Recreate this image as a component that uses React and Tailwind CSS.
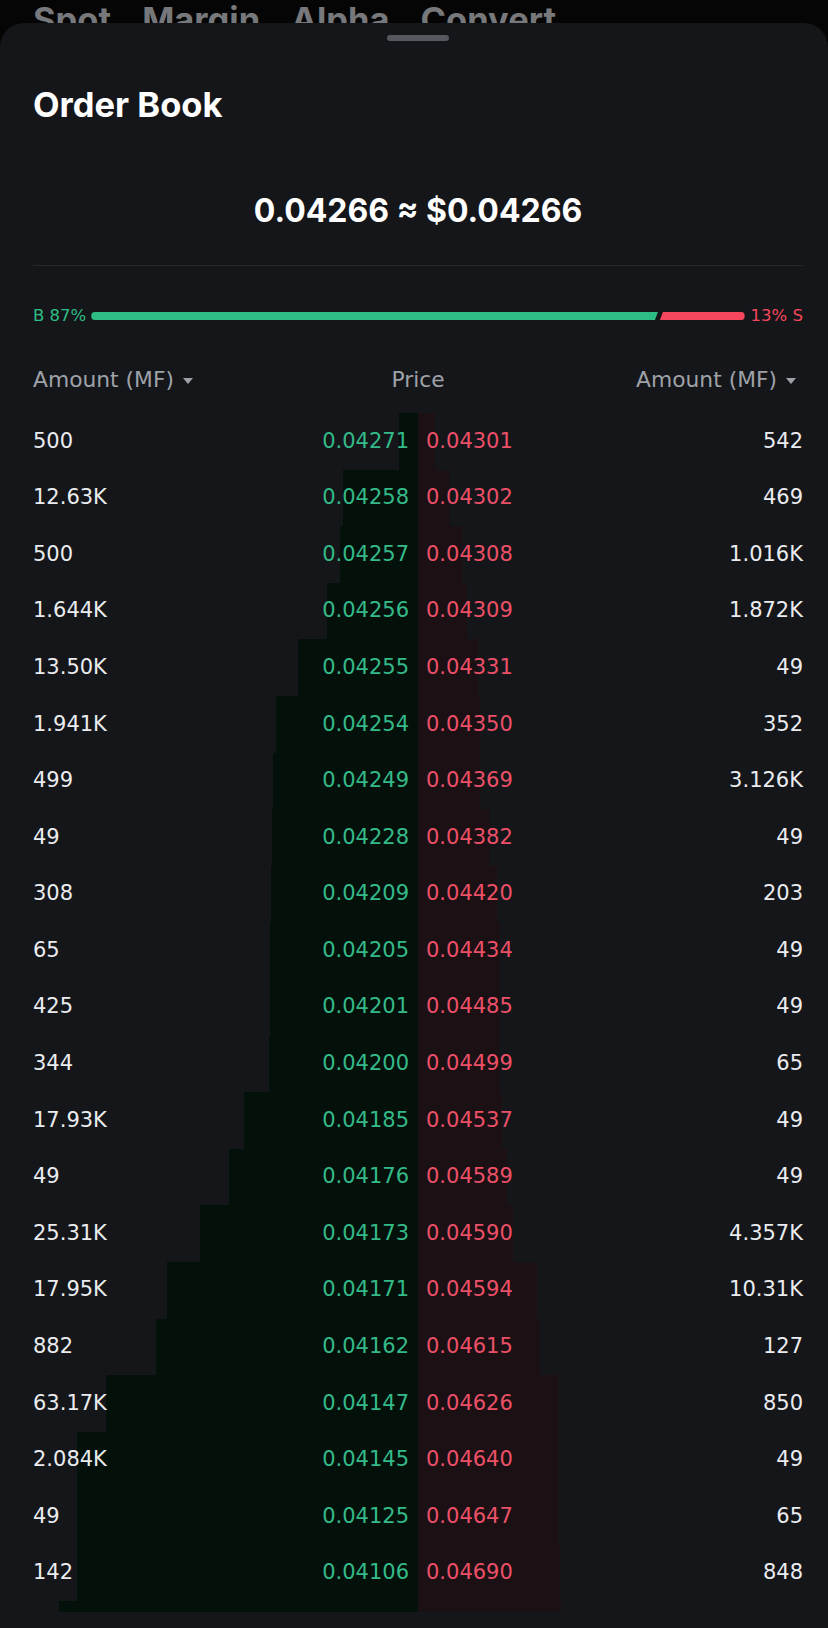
const tabs = ['Spot', 'Margin', 'Alpha', 'Convert'];

// [bid amount, bid price, ask price, ask amount, green depth left edge, red depth right edge]
const rows = [
  ['500', '0.04271', '0.04301', '542', 399, 435],
  ['12.63K', '0.04258', '0.04302', '469', 343, 450],
  ['500', '0.04257', '0.04308', '1.016K', 340, 462],
  ['1.644K', '0.04256', '0.04309', '1.872K', 327, 467],
  ['13.50K', '0.04255', '0.04331', '49', 298, 478],
  ['1.941K', '0.04254', '0.04350', '352', 276, 480],
  ['499', '0.04249', '0.04369', '3.126K', 273, 480],
  ['49', '0.04228', '0.04382', '49', 272, 490],
  ['308', '0.04209', '0.04420', '203', 271, 497],
  ['65', '0.04205', '0.04434', '49', 270, 500],
  ['425', '0.04201', '0.04485', '49', 270, 500],
  ['344', '0.04200', '0.04499', '65', 269, 500],
  ['17.93K', '0.04185', '0.04537', '49', 244, 502],
  ['49', '0.04176', '0.04589', '49', 229, 507],
  ['25.31K', '0.04173', '0.04590', '4.357K', 200, 513],
  ['17.95K', '0.04171', '0.04594', '10.31K', 167, 537],
  ['882', '0.04162', '0.04615', '127', 156, 540],
  ['63.17K', '0.04147', '0.04626', '850', 106, 558],
  ['2.084K', '0.04145', '0.04640', '49', 77, 558],
  ['49', '0.04125', '0.04647', '65', 77, 558],
  ['142', '0.04106', '0.04690', '848', 77, 560],
  ['', '', '', '', 59, 561],
];

const MID = 418;

function Caret() {
  return (
    <svg width="10" height="6" viewBox="0 0 10 6" className="ml-[9px] mt-[1px]">
      <path d="M0 0h10L5 6z" fill="#9ea2a8" />
    </svg>
  );
}

function Row({ row }) {
  const [bidAmt, bidPx, askPx, askAmt, gEdge, rEdge] = row;
  return (
    <div className="relative flex h-[56.6px] items-center">
      <div className="absolute inset-y-0 bg-[#04110b]" style={{ left: gEdge, width: MID - gEdge }} />
      <div className="absolute inset-y-0 bg-[#1b1013]" style={{ left: MID, width: rEdge - MID }} />
      <div className="relative flex w-[418px] shrink-0 justify-between pl-[33px] pr-[9px]">
        <span className="text-[#eaecef]">{bidAmt}</span>
        <span className="text-[#34ba89]">{bidPx}</span>
      </div>
      <div className="relative flex flex-1 justify-between pl-[8px] pr-[25px]">
        <span className="text-[#ec5068]">{askPx}</span>
        <span className="text-[#eaecef]">{askAmt}</span>
      </div>
    </div>
  );
}

export default function App() {
  return (
    <div className="flex h-[1628px] w-[828px] flex-col overflow-hidden bg-[#050505] font-['Inter',sans-serif]">
      <div className="h-[23px] shrink-0 overflow-hidden">
        <div className="flex gap-[31px] pl-[33px] text-[34.5px] font-bold leading-[40px] text-[#77787b]">
          {tabs.map((t) => (
            <span key={t}>{t}</span>
          ))}
        </div>
      </div>

      <div className="flex-1 rounded-t-[24px] bg-[#15161a] pt-[12px]">
        <div className="pl-[33px] pr-[25px]">
          <div className="mx-auto h-[6px] w-[62px] rounded-full bg-[#55585f]" />
          <h1 className="mt-[44px] h-[40px] text-[34.5px] font-bold leading-[40px] text-white">Order Book</h1>
          <div className="mt-[66px] h-[40px] text-center text-[32px] font-bold leading-[40px] text-white">
            0.04266 ≈ $0.04266
          </div>
          <div className="mt-[34px] h-px bg-[#25272b]" />

          <div className="mt-[38px] flex h-[24px] items-center font-['DejaVu_Sans',sans-serif] text-[16.5px]">
            <span className="text-[#2ebd85]">B 87%</span>
            <div className="ml-[5px] flex flex-1 items-center">
              <div className="h-[8px] flex-[87] rounded-l-full bg-[#2ebd85] [clip-path:polygon(0_0,100%_0,calc(100%_-_3px)_100%,0_100%)]" />
              <div className="ml-[2px] h-[8px] flex-[13] rounded-r-full bg-[#f6465d] [clip-path:polygon(3px_0,100%_0,100%_100%,0_100%)]" />
            </div>
            <span className="ml-[6px] text-[#f6465d]">13% S</span>
          </div>

          <div className="mt-[37px] flex h-[30px] items-center font-['DejaVu_Sans',sans-serif] text-[21.8px] text-[#9ea2a8]">
            <div className="flex flex-1 items-center">
              Amount (MF)
              <Caret />
            </div>
            <div>Price</div>
            <div className="flex flex-1 justify-end">
              <div className="mr-[7px] flex items-center">
                Amount (MF)
                <Caret />
              </div>
            </div>
          </div>
        </div>

        <div className="mt-[18px] h-[1199px] overflow-hidden font-['DejaVu_Sans',sans-serif] text-[21px]">
          {rows.map((row, i) => (
            <Row key={i} row={row} />
          ))}
        </div>
      </div>
    </div>
  );
}
